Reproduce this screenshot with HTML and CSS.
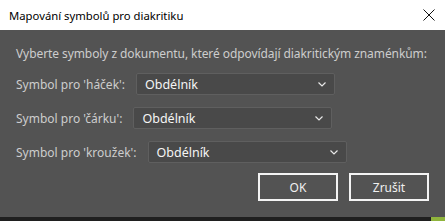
FILE: index.html
```html
<!DOCTYPE html>
<html lang="cs">
<head>
    <meta charset="UTF-8">
    <title>Mapování symbolů pro diakritiku</title>
    <link rel="stylesheet" href="styles.css">
</head>
<body>
    <div class="dialog">
        <div class="titlebar">
            <span class="title">Mapování symbolů pro diakritiku</span>
            <svg class="close" width="12" height="12" viewBox="0 0 12 12">
                <path d="M0.5 0.5 L11.5 11.5 M11.5 0.5 L0.5 11.5" stroke="#111" stroke-width="1" fill="none"/>
            </svg>
        </div>
        <div class="content">
            <p class="intro">Vyberte symboly z dokumentu, které odpovídají diakritickým znaménkům:</p>
            <div class="row">
                <span class="label">Symbol pro 'háček':</span>
                <div class="select">
                    <span>Obdélník</span>
                    <svg class="chevron" width="8" height="5" viewBox="0 0 8 5"><path d="M0.5 0.5 L4 4 L7.5 0.5" stroke="#e8e8e8" stroke-width="1.2" fill="none"/></svg>
                </div>
            </div>
            <div class="row">
                <span class="label">Symbol pro 'čárku':</span>
                <div class="select">
                    <span>Obdélník</span>
                    <svg class="chevron" width="8" height="5" viewBox="0 0 8 5"><path d="M0.5 0.5 L4 4 L7.5 0.5" stroke="#e8e8e8" stroke-width="1.2" fill="none"/></svg>
                </div>
            </div>
            <div class="row">
                <span class="label">Symbol pro 'kroužek':</span>
                <div class="select">
                    <span>Obdélník</span>
                    <svg class="chevron" width="8" height="5" viewBox="0 0 8 5"><path d="M0.5 0.5 L4 4 L7.5 0.5" stroke="#e8e8e8" stroke-width="1.2" fill="none"/></svg>
                </div>
            </div>
            <div class="buttons">
                <button class="btn">OK</button>
                <button class="btn">Zrušit</button>
            </div>
        </div>
        <div class="taskbar">
            <span class="tb-green"></span>
        </div>
    </div>
</body>
</html>
```

FILE: styles.css
```css
body {
    margin: 0;
    padding: 0;
    font-family: 'Noto Sans', sans-serif;
    background-color: #535353;
}

.dialog {
    width: 445px;
    height: 221px;
    display: flex;
    flex-direction: column;
    overflow: hidden;
}

.titlebar {
    height: 30px;
    flex-shrink: 0;
    background-color: #fff;
    display: flex;
    align-items: center;
    justify-content: space-between;
    padding: 0 9px 0 9px;
    box-sizing: border-box;
}

.title {
    font-size: 11.3px;
    color: #000;
}

.close {
    margin-right: 1px;
}

.content {
    flex: 1;
    background-color: #535353;
    padding: 16px 16px 0 16px;
}

.intro {
    margin: 0;
    font-size: 12px;
    color: #cdcdcd;
    line-height: 16px;
    white-space: nowrap;
    letter-spacing: -0.08px;
}

.row {
    display: flex;
    align-items: center;
    height: 22px;
    margin-top: 11px;
}

.row + .row {
    margin-top: 12px;
}

.label {
    font-size: 12px;
    color: #cdcdcd;
}

.select {
    width: 199px;
    height: 22px;
    margin-left: 11px;
    box-sizing: border-box;
    background-color: #494949;
    border: 1px solid #5f5f5f;
    border-radius: 2px;
    display: flex;
    align-items: center;
    justify-content: space-between;
    padding: 0 8px 0 8px;
    font-size: 12.5px;
    color: #f5f5f5;
}

.buttons {
    display: flex;
    justify-content: flex-end;
    gap: 11px;
    margin-top: 10px;
}

.btn {
    width: 80px;
    height: 28px;
    background-color: #535353;
    border: 2px solid #f4f4f4;
    color: #f0f0f0;
    font-family: 'Noto Sans', sans-serif;
    font-size: 12px;
    cursor: pointer;
}

.taskbar {
    height: 4px;
    flex-shrink: 0;
    background-color: #1f1f1f;
    display: flex;
    justify-content: flex-end;
}

.tb-green {
    width: 14px;
    background-color: #8fb43c;
}
```
